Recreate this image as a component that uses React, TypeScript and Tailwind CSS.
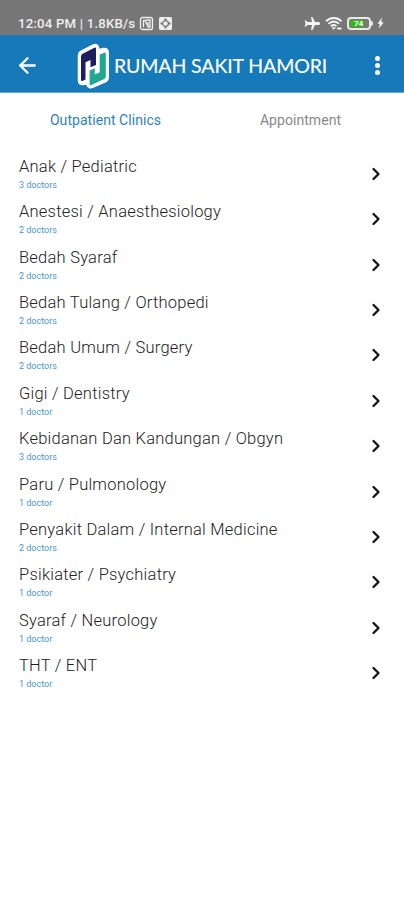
import React from 'react';
import { ArrowLeft, ChevronRight } from 'lucide-react';

interface Clinic {
  name: string;
  doctors: number;
}

const clinics: Clinic[] = [
  { name: 'Anak / Pediatric', doctors: 3 },
  { name: 'Anestesi / Anaesthesiology', doctors: 2 },
  { name: 'Bedah Syaraf', doctors: 2 },
  { name: 'Bedah Tulang / Orthopedi', doctors: 2 },
  { name: 'Bedah Umum / Surgery', doctors: 2 },
  { name: 'Gigi / Dentistry', doctors: 1 },
  { name: 'Kebidanan Dan Kandungan / Obgyn', doctors: 3 },
  { name: 'Paru / Pulmonology', doctors: 1 },
  { name: 'Penyakit Dalam / Internal Medicine', doctors: 2 },
  { name: 'Psikiater / Psychiatry', doctors: 1 },
  { name: 'Syaraf / Neurology', doctors: 1 },
  { name: 'THT / ENT', doctors: 1 },
];

const StatusBar = () => (
  <div className="flex h-[35px] items-start bg-[#777777] pt-[16px] pl-[18px] text-white">
    <span className="w-[119px] text-[13.2px] leading-[15px] font-medium tracking-[0.2px] whitespace-nowrap text-[#eeeeee]">
      12:04 PM | 1.8KB/s
    </span>
    {/* NFC */}
    <svg className="ml-[2px] h-[15px] w-[15px]" viewBox="0 0 15 15" fill="none" stroke="#eeeeee" strokeWidth="1.3">
      <rect x="1.5" y="1.5" width="12" height="12" rx="2" />
      <path d="M4.500 11.200V4.500H6L9 10.500V6M7 4h4v7H8.500" />
    </svg>
    <svg className="ml-[4px] h-[15px] w-[15px]" viewBox="0 0 15 15">
      <rect x="1" y="1" width="13" height="13" rx="1.5" fill="#eeeeee" />
      <path d="M7.500 2.500v2.500M7.500 10v2.500M2.500 7.500H5M10 7.500h2.500" stroke="#777777" strokeWidth="2" />
      <circle cx="7.5" cy="7.5" r="2.9" fill="none" stroke="#777777" strokeWidth="1.2" />
    </svg>
    <svg className="ml-[131px] h-[15px] w-[16px]" viewBox="0 0 16 15" fill="#f5f5f5">
      <path d="M16 7.500c0-1-.6-1.500-1.400-1.500h-3.600L8.500 1H7l1 5H3.400L2 4.400H.7l.8 3.100-.8 3.100H2L3.400 9H8l-1 5h1.500L11 9h3.600c.8 0 1.400-.5 1.400-1.500z" />
    </svg>
    <svg className="ml-[5px] h-[15px] w-[18px]" viewBox="0 0 18 15" fill="none" stroke="#f5f5f5" strokeWidth="1.9">
      <path d="M1 5.200c4.600-4.300 11-4.300 15.500 0M3.500 7.800c3-3 7.500-3 10.500 0M6 10.200c1.700-1.600 4-1.600 5.500 0" />
      <path d="M6.500 11.200h4.400l-2.200 2.500z" fill="#f5f5f5" stroke="none" />
      <path d="M12 12.500h4.500" />
    </svg>
    <div className="mt-[1px] ml-[4px] flex h-[13px] w-[24px] items-center rounded-[4px] border-2 border-[#e8e8e8] p-[1px]">
      <div className="flex h-full w-[14px] items-center rounded-[1px] bg-[#37b51c] pl-[4px]">
        <span className="text-[8px] leading-none font-bold">74</span>
      </div>
    </div>
    <div className="mt-[5px] h-[5px] w-[2px] rounded-r bg-[#e8e8e8]" />
    <svg className="mt-[1px] ml-[4px] h-[12px] w-[7px]" viewBox="0 0 7 12" fill="#f5f5f5">
      <path d="M5 .5L.5 6.700h2.300L2 11.500l4.700-6.200H4.200z" />
    </svg>
  </div>
);

const Logo = () => (
  <svg className="h-[50px] w-[36px] shrink-0" viewBox="0 0 36 50">
    <path
      d="M5 14.500Q5 12.500 6.400 11.800L19 5.300Q21.800 4.300 22 7V10.500L29 9Q31.700 8.800 31.700 11.500V36.500Q31.700 38.500 29.700 39.500L17 45Q14.300 46 13.500 43.500V40.500L8 42Q5 42.300 5 39.500z"
      fill="white"
      stroke="white"
      strokeWidth="4.5"
      strokeLinejoin="round"
    />
    <path d="M6 15.500q0-2 1.700-2.800L19.400 6.800q1.600-.7 1.600.9V24l-5.500 2.200V19l-5 2.200V38.500L7.400 40q-1.400.3-1.400-1z" fill="#201f5e" />
    <path d="M24.700 13.500l4.600-1.800q1.500-.5 1.500 1V35.500q0 1.800-1.500 2.500L16.400 44q-1.800.7-1.800-1V29.500l5.200-2.300V33.500l4.900-2.200z" fill="#20a98f" />
  </svg>
);

const ClinicRow = ({ clinic }: { clinic: Clinic }) => (
  <li className="flex h-[45.36px] items-start justify-between pr-[18px] pl-[19px]">
    <div>
      <div className="mt-[1px] text-[16.5px] leading-[20px] font-light tracking-[0.23px] whitespace-nowrap text-[#222222]">
        {clinic.name}
      </div>
      <div className="mt-[2px] text-[9px] leading-[12px] text-[#4a97c9]">
        {clinic.doctors} {clinic.doctors > 1 ? 'doctors' : 'doctor'}
      </div>
    </div>
    <ChevronRight className="mt-[8px]" size={20} strokeWidth={2.8} color="#161616" />
  </li>
);

const App: React.FC = () => {
  return (
    <div className="h-[900px] w-[404px] overflow-hidden bg-white font-['Roboto',sans-serif]">
      <StatusBar />

      <header className="flex h-[58px] items-center border-b border-[#6aaad3] bg-[#1679b9] pt-[4px] text-white">
        <ArrowLeft className="ml-[15px]" size={25} strokeWidth={2.2} />
        <div className="ml-[35px] flex items-center">
          <Logo />
          <h1 className="ml-[3px] w-[214px] font-['Lato',sans-serif] text-[19.5px] leading-none tracking-[-0.1px] whitespace-nowrap [-webkit-text-stroke:0.15px_white]">
            RUMAH SAKIT HAMORI
          </h1>
        </div>
        <div className="ml-[47px] flex flex-col gap-[2px]">
          <span className="h-[5px] w-[5px] rounded-full bg-white" />
          <span className="h-[5px] w-[5px] rounded-full bg-white" />
          <span className="h-[5px] w-[5px] rounded-full bg-white" />
        </div>
      </header>

      <nav className="flex h-[63px] pt-[17px] pr-[6px] pl-[8px] text-center text-[14px] leading-[20px] tracking-[0.05px]">
        <div className="flex-1 text-[#2f83bc]">Outpatient Clinics</div>
        <div className="flex-1 text-[#888888]">Appointment</div>
      </nav>

      <ul>
        {clinics.map(clinic => (
          <ClinicRow key={clinic.name} clinic={clinic} />
        ))}
      </ul>
    </div>
  );
};

export default App;
